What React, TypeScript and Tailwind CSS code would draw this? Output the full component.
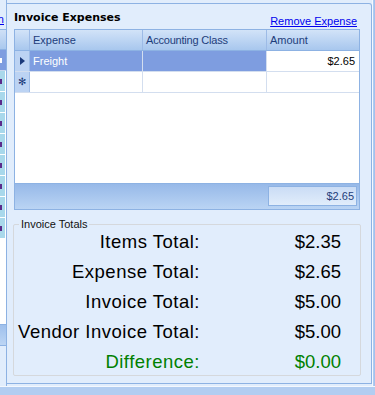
import React from "react";

interface TotalRow {
  label: string;
  value: string;
  green?: boolean;
}

const totals: TotalRow[] = [
  { label: "Items Total:", value: "$2.35" },
  { label: "Expense Total:", value: "$2.65" },
  { label: "Invoice Total:", value: "$5.00" },
  { label: "Vendor Invoice Total:", value: "$5.00" },
  { label: "Difference:", value: "$0.00", green: true },
];

const sans = "font-['Liberation_Sans',Arial,sans-serif]";

// the cut off grid of the neighbouring panel on the left
const SideStrip: React.FC = () => (
  <div className="w-[7px] shrink-0 border-r border-[#8db2e3] flex flex-col">
    <div className="h-[29px] flex justify-end pr-[2px] pt-[11px] overflow-hidden">
      <span className={`${sans} text-[11px] text-[#0000ee] underline whitespace-nowrap`}>Remove Selection</span>
    </div>
    <div className="h-[317px] border-t border-b border-[#8db2e3] bg-white flex flex-col">
      <div className="h-[20px] border-b border-[#8db2e3] bg-gradient-to-b from-[#cfe0f6] to-[#a9c8ee]" />
      <div className="h-[21px] border-b border-[#c7d7ee] bg-[#7e9de0] flex items-center">
        <div className="w-[2px] h-[5px] bg-white" />
      </div>
      {[0, 1, 2, 3, 4, 5, 6, 7].map((i) => (
        <div key={i} className="h-[21px] border-b border-white flex items-center">
          <div className="w-[5px] h-full bg-[#a9d8eb] flex items-center">
            <div className="w-[2px] h-[5px] bg-[#5a2a8a]" />
          </div>
        </div>
      ))}
      <div className="flex-1" />
      <div className="h-[21px] border-t border-[#8db2e3] bg-gradient-to-b from-[#9fc0ec] to-[#bcd5f4]" />
    </div>
  </div>
);

const ExpenseGrid: React.FC = () => (
  <div className={`${sans} ml-[1px] mr-[1px] h-[181px] border border-[#8db2e3] bg-white flex flex-col text-[11px]`}>
    {/* header */}
    <div className="flex h-[21px] border-b border-[#8db2e3] bg-gradient-to-b from-[#d2e3f8] to-[#a8c7ee] text-[#1e3d7b]">
      <div className="w-[15px] border-r border-[#9dbbe6]" />
      <div className="w-[113px] border-r border-[#9dbbe6] pl-[3px] flex items-center">Expense</div>
      <div className="w-[124px] border-r border-[#9dbbe6] pl-[3px] flex items-center tracking-[-0.2px]">Accounting Class</div>
      <div className="flex-1 pl-[3px] flex items-center">Amount</div>
    </div>
    {/* selected row */}
    <div className="flex h-[21px] border-b border-[#d3deef]">
      <div className="w-[15px] border-r border-[#9dbbe6] bg-[#bcd3f3] flex items-center justify-center">
        <svg width="5" height="8" viewBox="0 0 5 8">
          <path d="M0 0 L5 4 L0 8 Z" fill="#1b3a7a" />
        </svg>
      </div>
      <div className="w-[113px] border-r border-[#d3deef] bg-[#7e9de0] text-white pl-[3px] flex items-center">Freight</div>
      <div className="w-[124px] border-r border-[#d3deef] bg-[#7e9de0]" />
      <div className="flex-1 flex items-center justify-end pr-[4px] text-black">$2.65</div>
    </div>
    {/* new row */}
    <div className="flex h-[21px] border-b border-[#d3deef]">
      <div className="w-[15px] border-r border-[#9dbbe6] bg-[#bcd3f3] flex items-center justify-center text-[#1b3a7a] text-[10px] leading-none">
        ✻
      </div>
      <div className="w-[113px] border-r border-[#d3deef]" />
      <div className="w-[124px] border-r border-[#d3deef]" />
      <div className="flex-1" />
    </div>
    <div className="flex-1" />
    {/* footer */}
    <div className="h-[26px] border-t border-[#8db2e3] bg-gradient-to-b from-[#97b9e8] to-[#bad4f4] flex justify-end items-start pt-[2px] pr-[2px]">
      <div className="w-[89px] h-[20px] border border-[#8db2e3] bg-gradient-to-b from-[#cadcf5] to-[#e1edfb] flex items-center justify-end pr-[2px] text-[#1e3d7b]">
        $2.65
      </div>
    </div>
  </div>
);

const InvoiceTotals: React.FC = () => (
  <div className="relative mt-[14px] h-[152px] border border-[#d5d8dc] rounded-[2px] pt-[2px]">
    <div className={`${sans} absolute -top-[7px] left-[5px] px-[2px] bg-[#e1edfc] text-[11px] leading-[13px] text-[#111]`}>
      Invoice Totals
    </div>
    <div className={`${sans} grid grid-cols-[186px_141px] text-[18.5px] leading-[30px]`}>
      {totals.map((t) => (
        <React.Fragment key={t.label}>
          <div className={`text-right tracking-[0.5px] ${t.green ? "text-[#008000]" : "text-black"}`}>{t.label}</div>
          <div className={`text-right ${t.green ? "text-[#008000]" : "text-black"}`}>{t.value}</div>
        </React.Fragment>
      ))}
    </div>
  </div>
);

export default function App() {
  return (
    <div className="w-[375px] h-[395px] overflow-hidden bg-[#e1edfc] flex flex-col">
      <div className="flex h-[386px]">
        <SideStrip />
        <div className="w-[365px] shrink-0 mt-[3px] mb-[2px] border-t border-r border-b border-[#8db2e3] rounded-tr-[3px] bg-[#e1edfc] pl-[6px] pr-[10px] flex flex-col">
          <div className="flex items-start justify-between h-[25px]">
            <span className="font-['DejaVu_Sans',sans-serif] font-bold text-[11px] pl-[1px] pt-[6px] text-black">Invoice Expenses</span>
            <span className={`${sans} text-[11px] text-[#0000ee] underline pt-[9px] pr-[4px]`}>Remove Expense</span>
          </div>
          <ExpenseGrid />
          <InvoiceTotals />
        </div>
        <div className="flex-1 border-l border-[#f3f8fe] bg-gradient-to-r from-[#b3cff3] to-[#9dbdea]" />
      </div>
      <div className="flex-1 border-t border-[#f3f8fe] bg-[#b2cdf1]" />
    </div>
  );
}
